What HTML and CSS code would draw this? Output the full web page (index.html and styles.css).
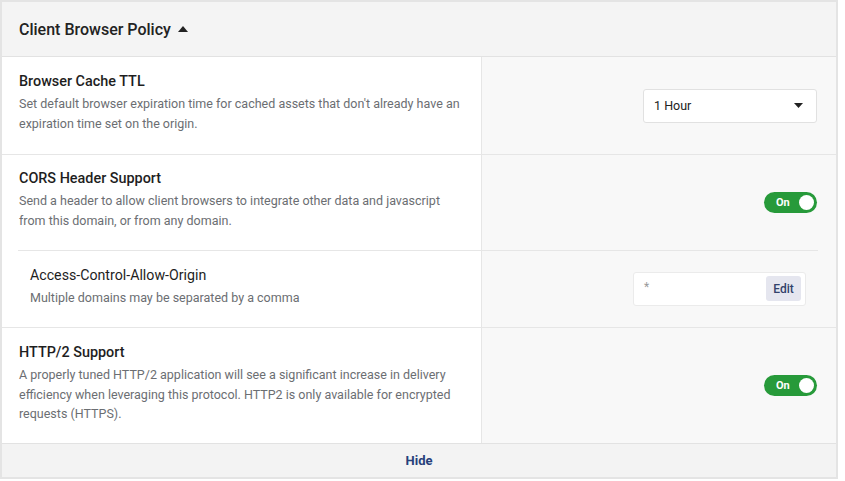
FILE: index.html
```html
<!DOCTYPE html>
<html>
<head>
<meta charset="utf-8">
<link rel="stylesheet" href="styles.css">
</head>
<body>
<div class="card">
  <div class="card-header">
    <span class="card-title">Client Browser Policy</span>
    <svg class="caret-up" width="10" height="6" viewBox="0 0 10 6"><path d="M0 6 L5 0 L10 6 Z" fill="#222"/></svg>
  </div>

  <div class="row row-ttl">
    <div class="col-left">
      <div class="setting-title">Browser Cache TTL</div>
      <div class="setting-desc">Set default browser expiration time for cached assets that don't already have an expiration time set on the origin.</div>
    </div>
    <div class="col-right">
      <div class="select">
        <span>1 Hour</span>
        <svg width="9" height="5" viewBox="0 0 9 5"><path d="M0 0 L9 0 L4.5 5 Z" fill="#222"/></svg>
      </div>
    </div>
  </div>

  <div class="row row-cors">
    <div class="col-left">
      <div class="setting-title">CORS Header Support</div>
      <div class="setting-desc">Send a header to allow client browsers to integrate other data and javascript from this domain, or from any domain.</div>
    </div>
    <div class="col-right">
      <div class="toggle"><span class="toggle-label">On</span><span class="knob"></span></div>
    </div>
  </div>

  <div class="row row-sub">
    <div class="col-left sub-left">
      <div class="sub-title">Access-Control-Allow-Origin</div>
      <div class="setting-desc">Multiple domains may be separated by a comma</div>
    </div>
    <div class="col-right sub-right">
      <div class="input">
        <span class="input-value">*</span>
        <span class="edit-btn">Edit</span>
      </div>
    </div>
  </div>

  <div class="row row-http">
    <div class="col-left">
      <div class="setting-title">HTTP/2 Support</div>
      <div class="setting-desc">A properly tuned HTTP/2 application will see a significant increase in delivery efficiency when leveraging this protocol. HTTP2 is only available for encrypted requests (HTTPS).</div>
    </div>
    <div class="col-right">
      <div class="toggle"><span class="toggle-label">On</span><span class="knob"></span></div>
    </div>
  </div>

  <div class="card-footer">Hide</div>
</div>
</body>
</html>
```

FILE: styles.css
```css
html, body {
  margin: 0;
  padding: 0;
  background: #ffffff;
}

body {
  font-family: Roboto, "Liberation Sans", Arial, sans-serif;
  color: #222222;
}

.card {
  width: 834px;
  border: 2px solid #e4e4e4;
  background: #ffffff;
}

.card-header {
  height: 53px;
  background: #f4f4f4;
  border-bottom: 1px solid #e2e2e2;
  display: flex;
  align-items: center;
  padding-left: 17px;
  padding-top: 1px;
  box-sizing: content-box;
}

.card-title {
  font-size: 16px;
  font-weight: 500;
  color: #222222;
}

.caret-up {
  margin-left: 7px;
  margin-top: -1px;
}

.row {
  display: flex;
  border-bottom: 1px solid #e6e6e6;
}

.col-left {
  width: 462px;
  padding: 0 0 0 17px;
  background: #ffffff;
  border-right: 1px solid #e6e6e6;
}

.col-right {
  flex: 1;
  background: #f8f8f8;
  display: flex;
  align-items: center;
  justify-content: flex-end;
  padding-right: 19px;
}

.row-ttl { height: 97px; }
.row-ttl .col-left { padding-top: 15px; }

.row-cors { height: 95px; border-bottom: none; }
.row-cors .col-left { padding-top: 14px; }

.row-sub { height: 77px; }
.sub-left {
  padding-left: 28px;
  padding-top: 16px;
  width: 451px;
  background: #ffffff linear-gradient(#e6e6e6, #e6e6e6) 16px 0 / 100% 1px no-repeat;
}
.sub-right {
  padding-right: 30px;
  background: #f8f8f8 linear-gradient(#e6e6e6, #e6e6e6) 0 0 / 336px 1px no-repeat;
}

.row-http { height: 115px; border-bottom: 1px solid #e2e2e2; }
.row-http .col-left { padding-top: 15px; }

.setting-title {
  font-size: 14.4px;
  font-weight: 500;
  line-height: 20px;
  color: #1e1e1e;
  margin-bottom: 2px;
}

.sub-title {
  font-size: 14.2px;
  font-weight: 400;
  line-height: 18px;
  color: #1e1e1e;
  margin-bottom: 4px;
}

.setting-desc {
  font-size: 12.5px;
  line-height: 19.6px;
  color: #6b6e72;
  width: 446px;
}

.select {
  width: 174px;
  height: 34px;
  box-sizing: border-box;
  background: #ffffff;
  border: 1px solid #e1e1e1;
  border-radius: 3px;
  display: flex;
  align-items: center;
  justify-content: space-between;
  padding: 0 13px 0 10px;
  font-size: 12.5px;
  color: #222222;
}

.toggle {
  width: 53px;
  height: 21px;
  border-radius: 11px;
  background: #279a3a;
  display: flex;
  align-items: center;
  justify-content: space-between;
  padding: 0 3px 0 12px;
  box-sizing: border-box;
}

.toggle-label {
  color: #ffffff;
  font-size: 11px;
  font-weight: 700;
}

.knob {
  width: 15px;
  height: 15px;
  border-radius: 50%;
  background: #ffffff;
}

.input {
  width: 173px;
  height: 34px;
  box-sizing: border-box;
  background: #ffffff;
  border: 1px solid #ebebeb;
  border-radius: 3px;
  display: flex;
  align-items: center;
  justify-content: space-between;
  padding: 0 4px 0 10px;
}

.input-value {
  color: #9a9a9a;
  font-size: 12px;
  margin-top: -4px;
}

.edit-btn {
  width: 35px;
  height: 25px;
  background: #e5e6ef;
  border-radius: 3px;
  color: #33426b;
  font-size: 12px;
  font-weight: 500;
  display: flex;
  align-items: center;
  justify-content: center;
}

.card-footer {
  height: 33px;
  background: #f3f3f3;
  display: flex;
  align-items: center;
  justify-content: center;
  font-size: 13px;
  font-weight: 700;
  color: #26407a;
}
```
